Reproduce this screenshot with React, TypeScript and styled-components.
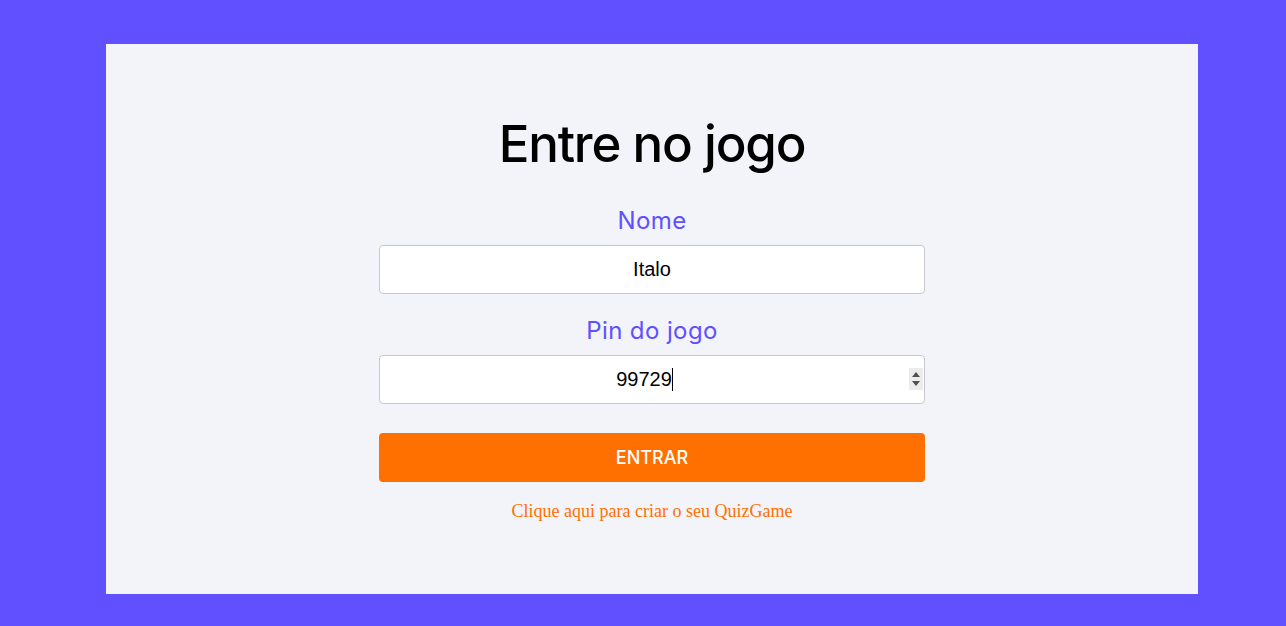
import React from "react";
import styled, { createGlobalStyle } from "styled-components";

const Global = createGlobalStyle`
  html, body { margin: 0; padding: 0; }
  body { background: #6050ff; font-family: "Inter", "Liberation Sans", sans-serif; }
  * { box-sizing: border-box; }
`;

const Page = styled.div`
  min-height: 626px;
  padding: 44px 88px 32px 106px;
  display: flex;
`;

const Card = styled.main`
  flex: 1;
  height: 550px;
  background: #f3f4f9;
  display: flex;
  flex-direction: column;
  align-items: center;
  padding-top: 69px;
`;

const Title = styled.h1`
  margin: 0;
  font-family: "Inter", sans-serif;
  font-weight: 500;
  font-size: 51px;
  line-height: 62px;
  letter-spacing: -1.2px;
  color: #000;
`;

const Form = styled.form`
  width: 546px;
  display: flex;
  flex-direction: column;
  margin-top: 33px;
`;

const Label = styled.label<{ $top?: number }>`
  display: block;
  text-align: center;
  font-family: "Inter", sans-serif;
  font-size: 24px;
  font-weight: 400;
  letter-spacing: 0.4px;
  color: #6050ff;
  line-height: 26px;
  margin-top: ${(p) => p.$top ?? 0}px;
  margin-bottom: 11px;
`;

const Field = styled.div`
  position: relative;
`;

const Input = styled.input<{ $spin?: boolean }>`
  width: 100%;
  height: 49px;
  border: 1px solid #c8c8cc;
  border-radius: 4px;
  background: #fff;
  text-align: center;
  font-family: "Liberation Sans", Arial, sans-serif;
  font-size: 20px;
  color: #000;
  outline: none;
  padding: 0 ${(p) => (p.$spin ? 28 : 12)}px 0 12px;
`;

const Spinner = styled.div`
  position: absolute;
  right: 2px;
  top: 13px;
  width: 14px;
  height: 22px;
  background: #ececec;
  display: flex;
  flex-direction: column;
  align-items: center;
  justify-content: center;
  gap: 4px;
`;

const Caret = styled.span`
  position: absolute;
  top: 13px;
  width: 1px;
  height: 23px;
  background: #000;
`;

const Button = styled.button`
  margin-top: 29px;
  height: 49px;
  border: none;
  border-radius: 4px;
  background: #ff7000;
  color: #fff;
  font-family: "Inter", sans-serif;
  font-size: 18px;
  font-weight: 500;
  cursor: pointer;
`;

const Link = styled.a`
  margin-top: 19px;
  text-align: center;
  font-family: "Liberation Serif", "Times New Roman", serif;
  font-size: 18px;
  color: #ff7000;
  text-decoration: none;
`;

export default function App() {
  return (
    <>
      <Global />
      <Page>
        <Card>
          <Title>Entre no jogo</Title>
          <Form onSubmit={(e) => e.preventDefault()}>
            <Label $top={0}>Nome</Label>
            <Input type="text" defaultValue="Italo" />
            <Label $top={24}>Pin do jogo</Label>
            <Field>
              <Input type="text" $spin defaultValue="99729" />
              <Caret style={{ left: 293 }} />
              <Spinner>
                <svg width="8" height="5" viewBox="0 0 8 5"><path d="M4 0 L8 5 L0 5 Z" fill="#505050" /></svg>
                <svg width="8" height="5" viewBox="0 0 8 5"><path d="M0 0 L8 0 L4 5 Z" fill="#505050" /></svg>
              </Spinner>
            </Field>
            <Button type="submit">ENTRAR</Button>
            <Link href="#">Clique aqui para criar o seu QuizGame</Link>
          </Form>
        </Card>
      </Page>
    </>
  );
}
